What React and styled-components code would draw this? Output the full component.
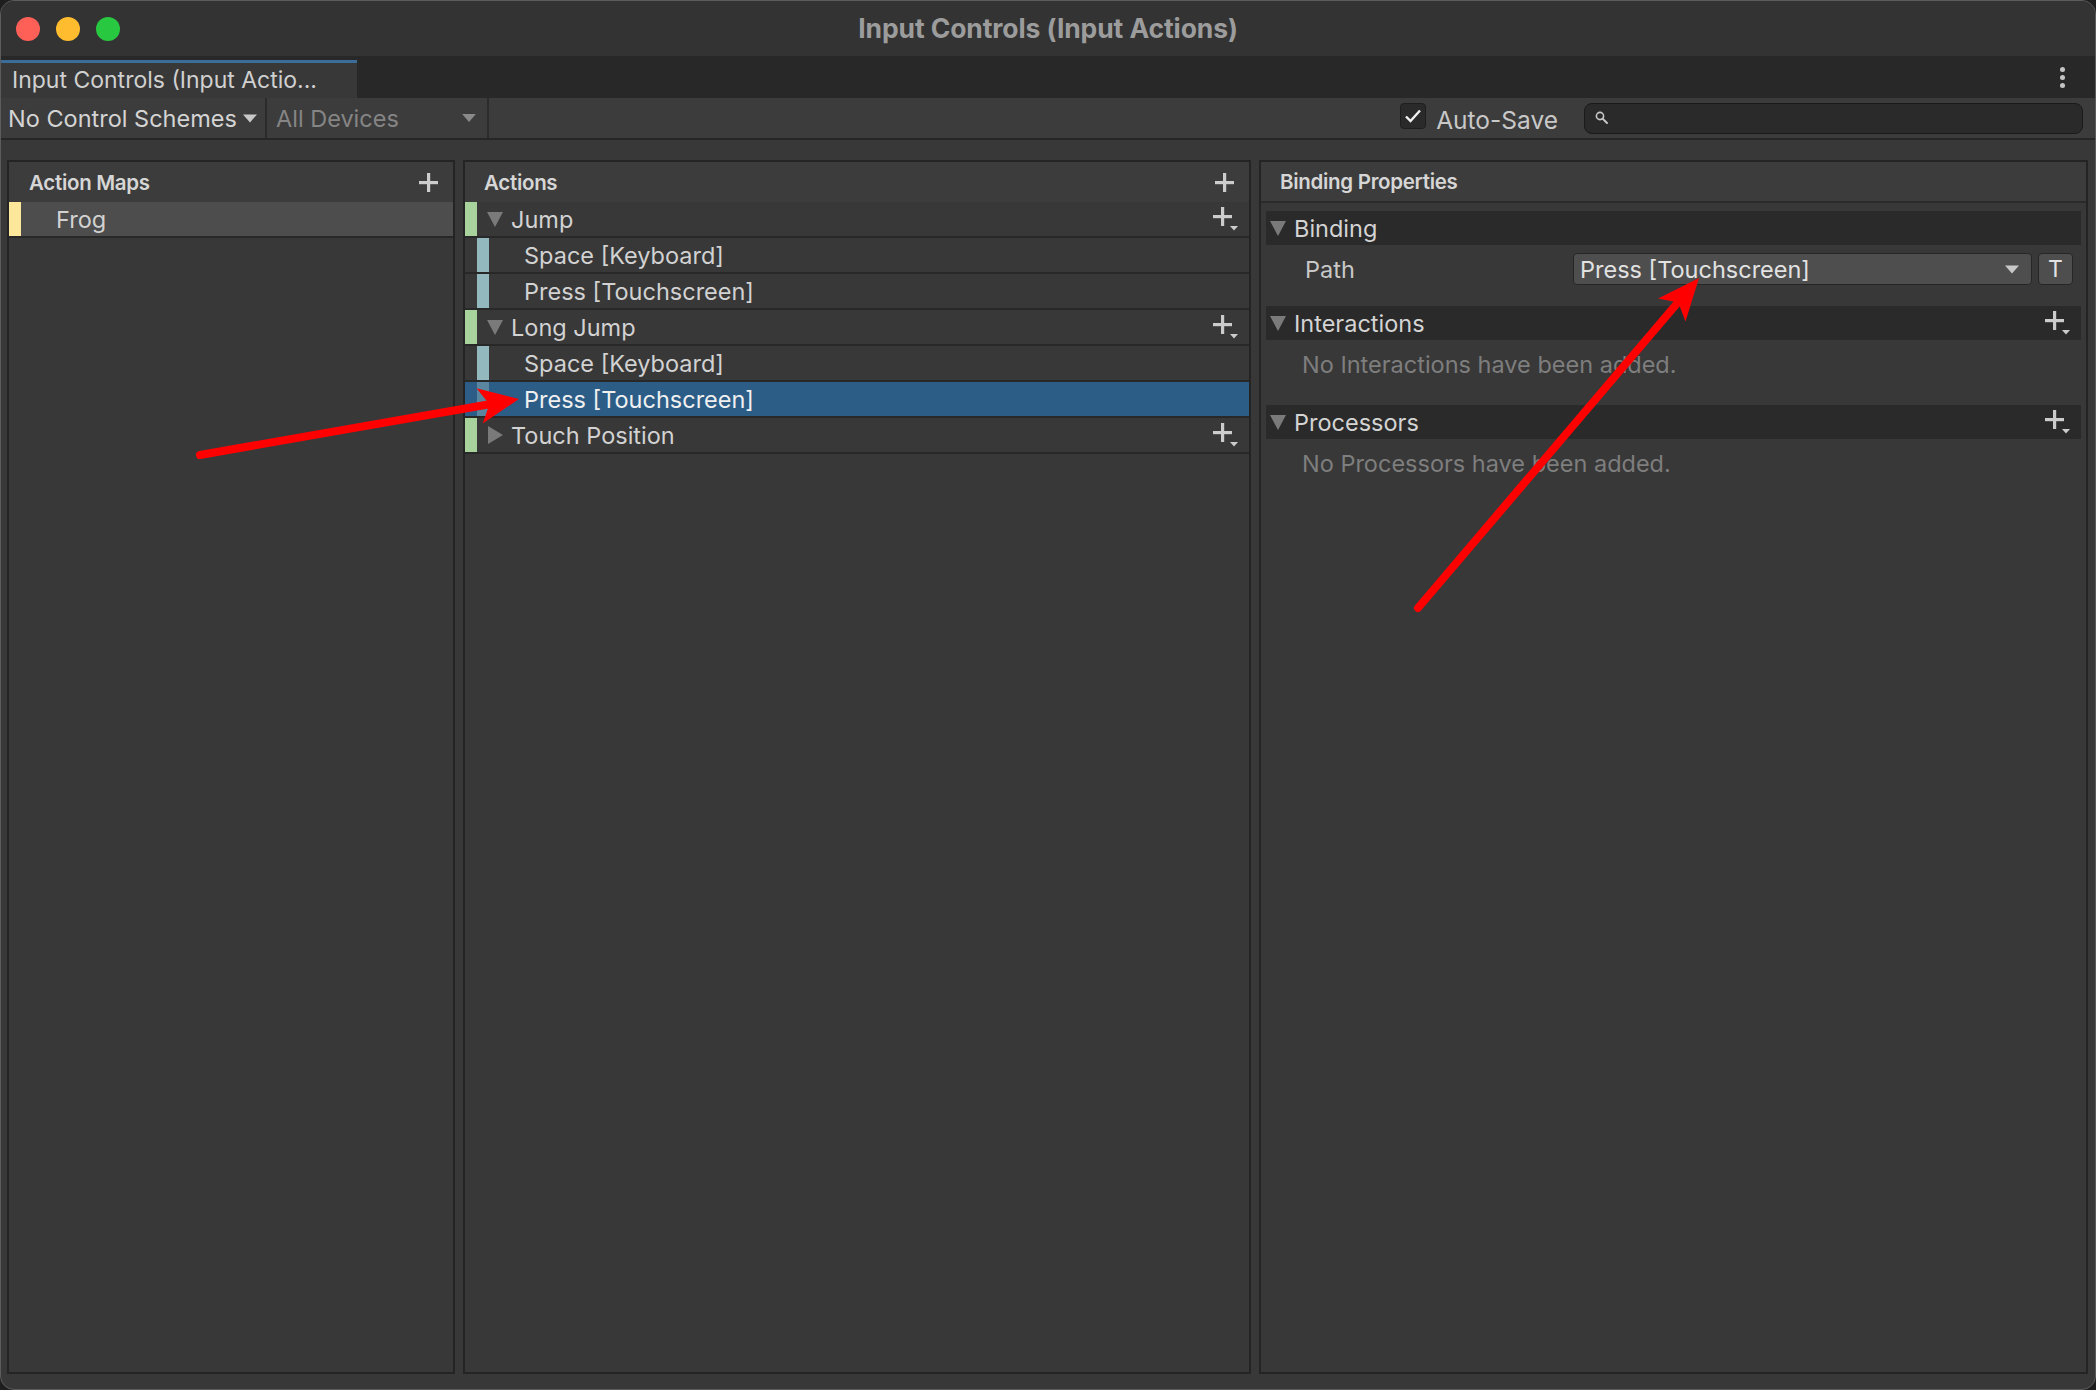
import React from "react";
import styled, { createGlobalStyle } from "styled-components";

const Global = createGlobalStyle`
  html, body { margin: 0; padding: 0; background: #1e1e1e; }
  * { box-sizing: border-box; }
`;

const Window = styled.div`
  position: relative;
  width: 2096px;
  height: 1390px;
  border-radius: 14px;
  border: 1px solid #5c5c5c;
  background: #383838;
  overflow: hidden;
  display: flex;
  flex-direction: column;
  font-family: Inter, "Noto Sans", sans-serif;
  color: #d2d2d2;
`;

const TitleBar = styled.div`
  height: 55px;
  flex: none;
  background: #333333;
  display: grid;
  grid-template-columns: 1fr auto 1fr;
  align-items: center;
`;

const Lights = styled.div`
  display: flex;
  gap: 16px;
  padding-left: 15px;
`;

const Light = styled.span`
  width: 24px;
  height: 24px;
  border-radius: 50%;
  background: ${(p) => p.$c};
`;

const Title = styled.div`
  font-weight: 700;
  font-size: 26.5px;
  color: #9c9c9c;
  letter-spacing: -0.1px;
  margin-top: -2px;
`;

const TabBar = styled.div`
  height: 42px;
  flex: none;
  background: #282828;
  display: flex;
  align-items: flex-end;
  justify-content: space-between;
`;

const Tab = styled.div`
  width: 356px;
  height: 38px;
  border-top: 3px solid #3c6c98;
  background: #383838;
  padding-left: 11px;
  font-size: 23px;
  line-height: 34px;
  color: #d0d0d0;
  white-space: nowrap;
`;

const Dots = styled.div`
  align-self: center;
  display: flex;
  flex-direction: column;
  gap: 3px;
  margin-right: 30px;
  & > span {
    width: 5px;
    height: 5px;
    border-radius: 50%;
    background: #c4c4c4;
  }
`;

const Toolbar = styled.div`
  height: 42px;
  flex: none;
  background: #3c3c3c;
  border-bottom: 2px solid #262626;
  display: flex;
  align-items: center;
`;

const ToolDrop = styled.div`
  height: 100%;
  width: ${(p) => p.$w}px;
  flex: none;
  padding: 0 ${(p) => p.$pr}px 0 ${(p) => p.$pl}px;
  display: flex;
  align-items: center;
  justify-content: ${(p) => (p.$spread ? "space-between" : "flex-start")};
  gap: 6px;
  font-size: 23.5px;
  color: ${(p) => p.$color};
  border-right: 2px solid #2b2b2b;
  white-space: nowrap;
  & > svg {
    flex: none;
  }
`;

const Spacer = styled.div`
  flex: 1;
`;

const CheckBox = styled.div`
  width: 26px;
  height: 26px;
  border-radius: 4px;
  background: #2a2a2a;
  border: 1px solid #1e1e1e;
  display: flex;
  align-items: center;
  justify-content: center;
  margin-right: 10px;
  margin-top: -5px;
`;

const CheckLabel = styled.div`
  font-size: 24.5px;
  color: #c8c8c8;
  margin-right: 26px;
  margin-top: 4px;
`;

const Search = styled.div`
  width: 499px;
  height: 31px;
  margin-right: 12px;
  border-radius: 8px;
  background: #2a2a2a;
  border: 1px solid #1a1a1a;
  display: flex;
  align-items: center;
  padding-left: 10px;
`;

const Content = styled.div`
  flex: 1;
  display: flex;
  gap: 8px;
  padding: 20px 7px 15px 6px;
  min-height: 0;
`;

const Panel = styled.div`
  width: ${(p) => (p.$w ? `${p.$w}px` : "auto")};
  flex: ${(p) => (p.$w ? "none" : "1")};
  border: 2px solid #242424;
  background: #383838;
  display: flex;
  flex-direction: column;
`;

const PanelHeader = styled.div`
  height: ${(p) => p.$h || 40}px;
  flex: none;
  background: #3c3c3c;
  display: flex;
  align-items: center;
  justify-content: space-between;
  padding: 0 14px 0 ${(p) => p.$pl || 14}px;
  font-weight: 600;
  font-size: 20.5px;
  color: #d6d6d6;
  border-bottom: ${(p) => (p.$line ? "2px solid #2a2a2a" : "none")};
  letter-spacing: -0.3px;
`;

const Row = styled.div`
  height: 36px;
  display: flex;
  align-items: center;
  border-bottom: 2px solid #282828;
  background: ${(p) => p.$bg || "transparent"};
  font-size: 23.5px;
  color: ${(p) => (p.$sel ? "#f0f0f0" : "#d2d2d2")};
  white-space: nowrap;
`;

const Bar = styled.span`
  width: 12px;
  align-self: stretch;
  flex: none;
  background: ${(p) => p.$c};
  margin-left: ${(p) => p.$ml || 0}px;
  opacity: ${(p) => p.$o || 1};
`;

const RowText = styled.span`
  margin-left: ${(p) => p.$ml}px;
  flex: 1;
`;

const Caret = styled.span`
  display: inline-flex;
  margin-left: ${(p) => p.$ml || 0}px;
  width: 16px;
  justify-content: center;
`;

const RowTool = styled.span`
  margin-right: 10px;
  display: inline-flex;
`;

const PropsBody = styled.div`
  padding: 8px 5px 0 5px;
  display: flex;
  flex-direction: column;
`;

const Foldout = styled.div`
  height: 34px;
  background: #2a2a2a;
  display: flex;
  align-items: center;
  padding: 0 10px 0 4px;
  font-size: 23.5px;
  color: #d4d4d4;
  gap: 8px;
`;

const FoldTitle = styled.span`
  flex: 1;
`;

const PropRow = styled.div`
  display: grid;
  grid-template-columns: 262px 1fr 35px;
  gap: 6px;
  align-items: center;
  padding: 8px 8px 21px 39px;
  font-size: 23.5px;
`;

const PropLabel = styled.span`
  color: #c8c8c8;
`;

const PathDrop = styled.div`
  height: 32px;
  border-radius: 4px;
  background: #4e4e4e;
  border: 1px solid #262626;
  display: flex;
  align-items: center;
  justify-content: space-between;
  padding: 0 12px 0 6px;
  color: #e2e2e2;
`;

const TButton = styled.div`
  height: 32px;
  border-radius: 4px;
  background: #4e4e4e;
  border: 1px solid #262626;
  display: flex;
  align-items: center;
  justify-content: center;
  color: #e2e2e2;
  font-size: 23px;
`;

const Empty = styled.div`
  padding: 10px 0 25px 36px;
  line-height: 30px;
  font-size: 23.5px;
  color: #7e7e7e;
`;

const Overlay = styled.svg`
  position: absolute;
  left: 0;
  top: 0;
  pointer-events: none;
`;

const TriDown = ({ c = "#7a7a7a", w = 16, h = 16 }) => (
  <svg width={w} height={h} viewBox="0 0 16 16">
    <polygon points="0,1 16,1 8,16" fill={c} />
  </svg>
);

const TriRight = ({ c = "#7a7a7a" }) => (
  <svg width="16" height="18" viewBox="0 0 16 18">
    <polygon points="1,0 16,9 1,18" fill={c} />
  </svg>
);

const SmallDown = ({ c = "#c8c8c8", w = 12, h = 7 }) => (
  <svg width={w} height={h} viewBox="0 0 12 7">
    <polygon points="0,0 12,0 6,7" fill={c} />
  </svg>
);

const Plus = () => (
  <svg width="21" height="21" viewBox="0 0 21 21">
    <rect x="9" y="1" width="3.2" height="19" fill="#cccccc" />
    <rect x="1" y="9" width="19" height="3.2" fill="#cccccc" />
  </svg>
);

const PlusDrop = () => (
  <svg width="26" height="26" viewBox="0 0 26 26">
    <rect x="8" y="1" width="3.2" height="19" fill="#cccccc" />
    <rect x="0" y="9" width="19" height="3.2" fill="#cccccc" />
    <polygon points="17,20 25,20 21,24.5" fill="#cccccc" />
  </svg>
);

const Check = () => (
  <svg width="18" height="16" viewBox="0 0 18 16">
    <polyline points="2,8.5 6.5,13 16,2.5" fill="none" stroke="#f0f0f0" strokeWidth="2.4" />
  </svg>
);

const SearchIcon = () => (
  <svg width="14" height="14" viewBox="0 0 14 14">
    <circle cx="5" cy="5" r="3.6" fill="none" stroke="#c8c8c8" strokeWidth="1.6" />
    <line x1="7.6" y1="7.6" x2="12" y2="12" stroke="#c8c8c8" strokeWidth="2" strokeLinecap="round" />
  </svg>
);

const GREEN = "#a8d39c";
const BLUE = "#93b9bf";

const actions = [
  { type: "action", name: "Jump", open: true },
  { type: "binding", name: "Space [Keyboard]" },
  { type: "binding", name: "Press [Touchscreen]" },
  { type: "action", name: "Long Jump", open: true },
  { type: "binding", name: "Space [Keyboard]" },
  { type: "binding", name: "Press [Touchscreen]", sel: true },
  { type: "action", name: "Touch Position", open: false },
];

export default function App() {
  return (
    <>
      <Global />
      <Window>
        <TitleBar>
          <Lights>
            <Light $c="#fe5f57" />
            <Light $c="#febc2e" />
            <Light $c="#28c840" />
          </Lights>
          <Title>Input Controls (Input Actions)</Title>
          <div />
        </TitleBar>
        <TabBar>
          <Tab>Input Controls (Input Actio...</Tab>
          <Dots>
            <span />
            <span />
            <span />
          </Dots>
        </TabBar>
        <Toolbar>
          <ToolDrop $w={266} $pl={7} $pr={6} $color="#d4d4d4">
            No Control Schemes <SmallDown w={14} h={9} />
          </ToolDrop>
          <ToolDrop $w={222} $pl={9} $pr={11} $spread $color="#858585">
            All Devices <SmallDown c="#8a8a8a" w={14} h={8} />
          </ToolDrop>
          <Spacer />
          <CheckBox>
            <Check />
          </CheckBox>
          <CheckLabel>Auto-Save</CheckLabel>
          <Search>
            <SearchIcon />
          </Search>
        </Toolbar>
        <Content>
          <Panel $w={448}>
            <PanelHeader $pl={20}>
              Action Maps
              <Plus />
            </PanelHeader>
            <Row $bg="#4d4d4d">
              <Bar $c="#fde79a" />
              <RowText $ml={35}>Frog</RowText>
            </Row>
          </Panel>
          <Panel $w={788}>
            <PanelHeader $pl={19}>
              Actions
              <Plus />
            </PanelHeader>
            {actions.map((a, i) =>
              a.type === "action" ? (
                <Row key={i}>
                  <Bar $c={GREEN} />
                  <Caret $ml={10}>{a.open ? <TriDown /> : <TriRight />}</Caret>
                  <RowText $ml={8}>{a.name}</RowText>
                  <RowTool>
                    <PlusDrop />
                  </RowTool>
                </Row>
              ) : (
                <Row key={i} $bg={a.sel ? "#2c5d87" : undefined} $sel={a.sel}>
                  <Bar $c={BLUE} $ml={12} $o={a.sel ? 0.45 : 1} />
                  <RowText $ml={35}>{a.name}</RowText>
                </Row>
              )
            )}
          </Panel>
          <Panel>
            <PanelHeader $pl={19} $h={41} $line>
              Binding Properties
            </PanelHeader>
            <PropsBody>
              <Foldout>
                <TriDown />
                <FoldTitle>Binding</FoldTitle>
              </Foldout>
              <PropRow>
                <PropLabel>Path</PropLabel>
                <PathDrop>
                  Press [Touchscreen]
                  <SmallDown c="#c8c8c8" w={14} h={9} />
                </PathDrop>
                <TButton>T</TButton>
              </PropRow>
              <Foldout>
                <TriDown />
                <FoldTitle>Interactions</FoldTitle>
                <PlusDrop />
              </Foldout>
              <Empty>No Interactions have been added.</Empty>
              <Foldout>
                <TriDown />
                <FoldTitle>Processors</FoldTitle>
                <PlusDrop />
              </Foldout>
              <Empty>No Processors have been added.</Empty>
            </PropsBody>
          </Panel>
        </Content>
        <Overlay width="2096" height="1390" viewBox="0 0 2096 1390">
          <line x1="199" y1="454" x2="490" y2="403" stroke="#ff0000" strokeWidth="8" strokeLinecap="round" />
          <polygon points="518,398 481.7,422.6 488.4,403.2 475.5,387.2" fill="#ff0000" />
          <line x1="1417" y1="607" x2="1679" y2="299" stroke="#ff0000" strokeWidth="8" strokeLinecap="round" />
          <polygon points="1698,277 1684.5,320.6 1677.3,301.4 1657.1,297.4" fill="#ff0000" />
        </Overlay>
      </Window>
    </>
  );
}
